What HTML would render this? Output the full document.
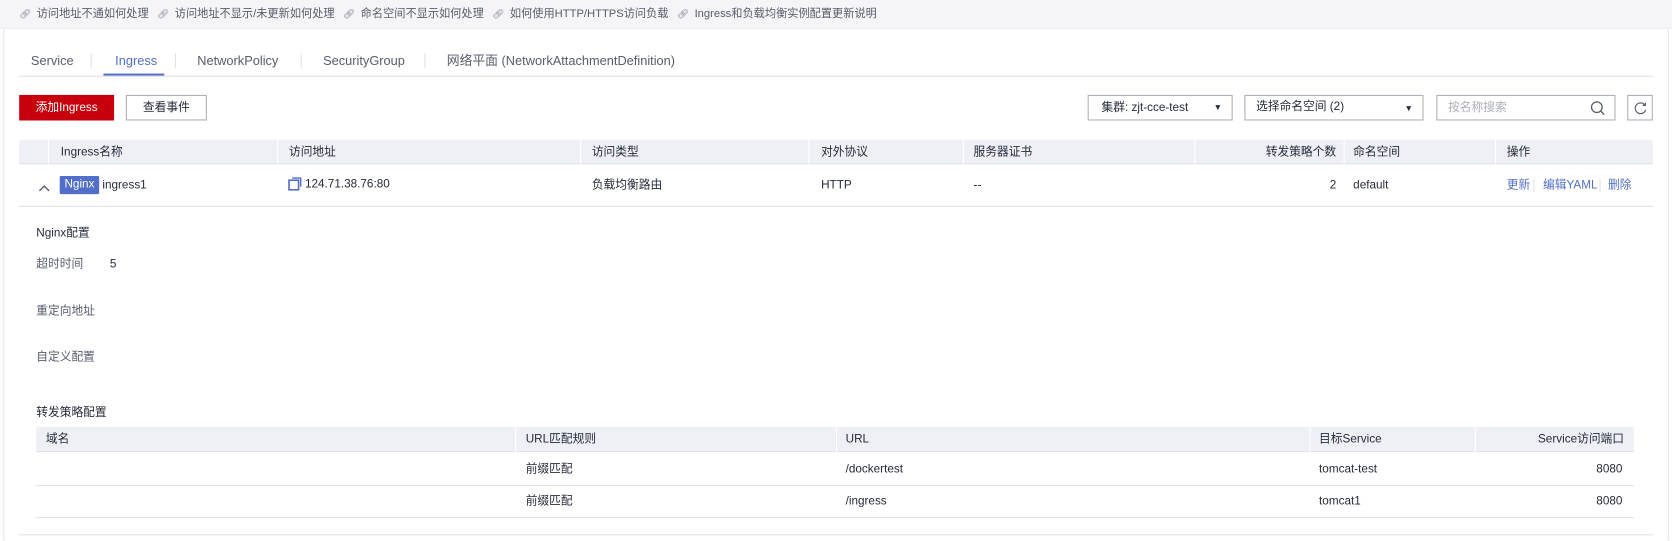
<!DOCTYPE html>
<html><head><meta charset="utf-8"><style>
*{box-sizing:border-box;margin:0;padding:0}
html,body{width:1672px;height:540px;overflow:hidden;background:#fff}
#w{position:absolute;left:0;top:0;width:1568px;height:507px;transform:scale(1.06633);transform-origin:0 0;font-family:"Liberation Sans","Noto Sans CJK SC",sans-serif;font-size:11px;line-height:14px;color:#252b3a}
.a{position:absolute;white-space:nowrap;line-height:14px}
.top{position:absolute;left:0;top:0;width:1568px;height:27px;background:#f5f5f7;border-bottom:1px solid #ececef;color:#575d6c;font-size:10.5px;line-height:27px;padding-left:18px}
.top span{margin-right:8px}
.top i{font-style:normal;color:#8a8e99;margin-right:5px;font-size:9px}
.panel{position:absolute;left:3px;top:27px;width:1562px;height:480px;border-left:1px solid #e6e6e9;border-right:1px solid #e6e6e9}
.tab{position:absolute;top:50px;font-size:12px;line-height:15px;color:#575d6c}
.sep{position:absolute;top:50px;width:1px;height:14px;background:#dfe1e6}
.hd{position:absolute;left:18px;top:131px;width:1532px;height:23px;background:#eef0f5;border-bottom:1px solid #dfe1e6}
.hd span,.ih span{position:absolute;top:5px;line-height:14px;color:#252b3a}
.cs{position:absolute;top:0;width:1px;height:23px;background:#fff}
.lnk{color:#526ecc}
.ih{position:absolute;left:34px;top:400px;width:1498px;height:24px;background:#eef0f5;border-bottom:1px solid #dfe1e6}
.box{position:absolute;border:1px solid #adb0b8;background:#fff;height:24px}
.lab{color:#575d6c}
</style></head><body><div id="w">
<div class="top"><span><i>🔗︎</i>访问地址不通如何处理</span><span><i>🔗︎</i>访问地址不显示/未更新如何处理</span><span><i>🔗︎</i>命名空间不显示如何处理</span><span><i>🔗︎</i>如何使用HTTP/HTTPS访问负载</span><span><i>🔗︎</i>Ingress和负载均衡实例配置更新说明</span></div>
<div class="panel"></div>
<div class="tab" style="left:29px">Service</div>
<div class="sep" style="left:85px"></div>
<div class="tab" style="left:108px;color:#526ecc">Ingress</div>
<div class="a" style="left:97px;top:69px;width:57px;height:2px;background:#526ecc"></div>
<div class="sep" style="left:164px"></div>
<div class="tab" style="left:185px">NetworkPolicy</div>
<div class="sep" style="left:282px"></div>
<div class="tab" style="left:303px">SecurityGroup</div>
<div class="sep" style="left:398px"></div>
<div class="tab" style="left:419px">网络平面 (NetworkAttachmentDefinition)</div>
<div class="a" style="left:18px;top:71px;width:1532px;height:1px;background:#dfe1e6"></div>

<div class="a" style="left:18px;top:89px;width:89px;height:24px;background:#c7000b;color:#fff;text-align:center;line-height:24px">添加Ingress</div>
<div class="box" style="left:118px;top:89px;width:76px;text-align:center;line-height:22px">查看事件</div>
<div class="box" style="left:1020px;top:89px;width:136px;line-height:22px;padding-left:12px">集群: zjt-cce-test<span class="a" style="right:9px;top:4px;font-size:8px">▼</span></div>
<div class="box" style="left:1167px;top:89px;width:168px;line-height:20px;padding-left:10px">选择命名空间 (2)<span class="a" style="right:9px;top:5px;font-size:8px">▼</span></div>
<div class="box" style="left:1347px;top:89px;width:168px;line-height:22px;padding-left:10px;color:#adb0b8">按名称搜索
<svg class="a" style="right:8px;top:4px" width="15" height="15" viewBox="0 0 15 15"><circle cx="6.5" cy="6.5" r="5" fill="none" stroke="#575d6c" stroke-width="1.2"/><path d="M10 10l3.5 3.5" stroke="#575d6c" stroke-width="1.2"/></svg></div>
<div class="box" style="left:1526px;top:89px;width:24px"><svg class="a" style="left:5px;top:5px" width="13" height="13" viewBox="0 0 13 13"><path d="M10.5 3.5A5 5 0 1 0 11.3 8" fill="none" stroke="#575d6c" stroke-width="1.1"/><path d="M8.5 3.8H11V1.2" fill="none" stroke="#575d6c" stroke-width="1.1"/></svg></div>

<div class="hd">
<span style="left:39px">Ingress名称</span><div class="cs" style="left:27px"></div>
<div class="cs" style="left:242px"></div><span style="left:253px">访问地址</span>
<div class="cs" style="left:526px"></div><span style="left:537px">访问类型</span>
<div class="cs" style="left:740px"></div><span style="left:752px">对外协议</span>
<div class="cs" style="left:885px"></div><span style="left:895px">服务器证书</span>
<div class="cs" style="left:1102px"></div><span style="right:297px">转发策略个数</span>
<div class="cs" style="left:1242px"></div><span style="left:1251px">命名空间</span>
<div class="cs" style="left:1384px"></div><span style="left:1395px">操作</span>
</div>
<div class="a" style="left:36px;top:170px;width:11px;height:7px"><svg width="11" height="7"><path d="M1 6L5.5 1.5L10 6" fill="none" stroke="#575d6c" stroke-width="1.3"/></svg></div>
<div class="a" style="left:56px;top:165px;width:37px;height:17px;background:#526ecc;color:#fff;text-align:center;line-height:17px;border-radius:1px">Nginx</div>
<div class="a" style="left:96px;top:167px">ingress1</div>
<svg class="a" style="left:270px;top:166px" width="13" height="13"><rect x="1" y="3" width="9" height="9" fill="none" stroke="#526ecc" stroke-width="1.5"/><path d="M4 1H12V9" fill="none" stroke="#526ecc" stroke-width="1.3"/></svg>
<div class="a" style="left:286px;top:166px">124.71.38.76:80</div>
<div class="a" style="left:555px;top:167px">负载均衡路由</div>
<div class="a" style="left:770px;top:167px">HTTP</div>
<div class="a" style="left:913px;top:167px">--</div>
<div class="a" style="left:1247px;top:167px">2</div>
<div class="a" style="left:1269px;top:167px">default</div>
<div class="a lnk" style="left:1413px;top:167px">更新</div>
<div class="a" style="left:1438px;top:168px;width:1px;height:12px;background:#dfe1e6"></div>
<div class="a lnk" style="left:1447px;top:167px">编辑YAML</div>
<div class="a" style="left:1500px;top:168px;width:1px;height:12px;background:#dfe1e6"></div>
<div class="a lnk" style="left:1508px;top:167px">删除</div>
<div class="a" style="left:18px;top:193px;width:1532px;height:1px;background:#dfe1e6"></div>

<div class="a" style="left:34px;top:212px">Nginx配置</div>
<div class="a lab" style="left:34px;top:241px">超时时间</div>
<div class="a" style="left:103px;top:241px">5</div>
<div class="a lab" style="left:34px;top:285px">重定向地址</div>
<div class="a lab" style="left:34px;top:328px">自定义配置</div>
<div class="a" style="left:34px;top:380px">转发策略配置</div>

<div class="ih">
<span style="left:9px">域名</span>
<div class="cs" style="left:449px;height:24px"></div><span style="left:459px">URL匹配规则</span>
<div class="cs" style="left:750px;height:24px"></div><span style="left:759px">URL</span>
<div class="cs" style="left:1194px;height:24px"></div><span style="left:1203px">目标Service</span>
<div class="cs" style="left:1349px;height:24px"></div><span style="right:9px">Service访问端口</span>
</div>
<div class="a" style="left:493px;top:433px">前缀匹配</div>
<div class="a" style="left:793px;top:433px">/dockertest</div>
<div class="a" style="left:1237px;top:433px">tomcat-test</div>
<div class="a" style="left:1497px;top:433px">8080</div>
<div class="a" style="left:34px;top:455px;width:1498px;height:1px;background:#dfe1e6"></div>
<div class="a" style="left:493px;top:463px">前缀匹配</div>
<div class="a" style="left:793px;top:463px">/ingress</div>
<div class="a" style="left:1237px;top:463px">tomcat1</div>
<div class="a" style="left:1497px;top:463px">8080</div>
<div class="a" style="left:34px;top:485px;width:1498px;height:1px;background:#dfe1e6"></div>
<div class="a" style="left:18px;top:501px;width:1532px;height:1px;background:#dfe1e6"></div>
</div></body></html>
